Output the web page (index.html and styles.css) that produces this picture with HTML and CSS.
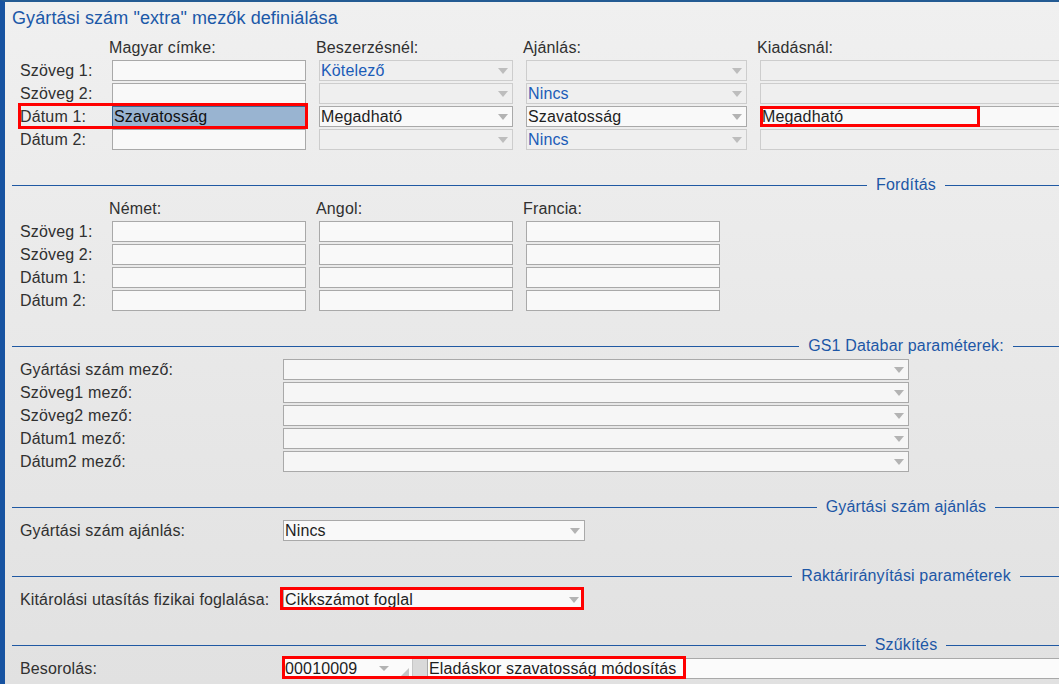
FILE: index.html
```html
<!DOCTYPE html>
<html lang="hu">
<head>
<meta charset="utf-8">
<title>Gyártási szám extra mezők definiálása</title>
<link rel="stylesheet" href="styles.css">
</head>
<body>
<div class="frame">
  <div class="form">
    <h1 class="title">Gyártási szám "extra" mezők definiálása</h1>

    <div class="grid g-def">
      <div></div>
      <div class="hdr">Magyar címke:</div>
      <div class="hdr">Beszerzésnél:</div>
      <div class="hdr">Ajánlás:</div>
      <div class="hdr">Kiadásnál:</div>

      <div class="lbl">Szöveg 1:</div>
      <div class="fld w194"></div>
      <div class="fld dis w194"><span class="val blue">Kötelező</span><i class="arr"></i></div>
      <div class="fld dis w221"><span class="val"></span><i class="arr"></i></div>
      <div class="fld dis wk"></div>

      <div class="lbl">Szöveg 2:</div>
      <div class="fld w194"></div>
      <div class="fld dis w194"><span class="val"></span><i class="arr"></i></div>
      <div class="fld dis w221"><span class="val blue">Nincs</span><i class="arr"></i></div>
      <div class="fld dis wk"></div>

      <div class="lbl host">Dátum 1:<span class="mark mark-d1"></span></div>
      <div class="fld hl w194"><span class="val">Szavatosság</span></div>
      <div class="fld w194"><span class="val">Megadható</span><i class="arr"></i></div>
      <div class="fld w221"><span class="val">Szavatosság</span><i class="arr"></i></div>
      <div class="fld wk host"><span class="val">Megadható</span><span class="mark mark-k"></span></div>

      <div class="lbl">Dátum 2:</div>
      <div class="fld w194"></div>
      <div class="fld dis w194"><span class="val"></span><i class="arr"></i></div>
      <div class="fld dis w221"><span class="val blue">Nincs</span><i class="arr"></i></div>
      <div class="fld dis wk"></div>
    </div>

    <div class="sep"><span class="ln"></span><span class="st">Fordítás</span><span class="ln"></span></div>

    <div class="grid g-tr">
      <div></div>
      <div class="hdr">Német:</div>
      <div class="hdr">Angol:</div>
      <div class="hdr">Francia:</div>

      <div class="lbl">Szöveg 1:</div>
      <div class="fld w194"></div>
      <div class="fld w194"></div>
      <div class="fld w194"></div>

      <div class="lbl">Szöveg 2:</div>
      <div class="fld w194"></div>
      <div class="fld w194"></div>
      <div class="fld w194"></div>

      <div class="lbl">Dátum 1:</div>
      <div class="fld w194"></div>
      <div class="fld w194"></div>
      <div class="fld w194"></div>

      <div class="lbl">Dátum 2:</div>
      <div class="fld w194"></div>
      <div class="fld w194"></div>
      <div class="fld w194"></div>
    </div>

    <div class="sep"><span class="ln"></span><span class="st">GS1 Databar paraméterek:</span><span class="ln"></span></div>

    <div class="grid g-wide">
      <div class="lbl">Gyártási szám mező:</div>
      <div class="fld gs w626"><span class="val"></span><i class="arr"></i></div>
      <div class="lbl">Szöveg1 mező:</div>
      <div class="fld gs w626"><span class="val"></span><i class="arr"></i></div>
      <div class="lbl">Szöveg2 mező:</div>
      <div class="fld gs w626"><span class="val"></span><i class="arr"></i></div>
      <div class="lbl">Dátum1 mező:</div>
      <div class="fld gs w626"><span class="val"></span><i class="arr"></i></div>
      <div class="lbl">Dátum2 mező:</div>
      <div class="fld gs w626"><span class="val"></span><i class="arr"></i></div>
    </div>

    <div class="sep"><span class="ln"></span><span class="st">Gyártási szám ajánlás</span><span class="ln"></span></div>

    <div class="grid g-wide">
      <div class="lbl">Gyártási szám ajánlás:</div>
      <div class="fld w302"><span class="val">Nincs</span><i class="arr"></i></div>
    </div>

    <div class="sep"><span class="ln"></span><span class="st">Raktárirányítási paraméterek</span><span class="ln"></span></div>

    <div class="grid g-wide">
      <div class="lbl">Kitárolási utasítás fizikai foglalása:</div>
      <div class="fld w301 host"><span class="val">Cikkszámot foglal</span><i class="arr"></i><span class="mark mark-kit"></span></div>
    </div>

    <div class="sep"><span class="ln"></span><span class="st">Szűkítés</span><span class="ln"></span></div>

    <div class="grid g-wide">
      <div class="lbl">Besorolás:</div>
      <div class="combo host">
        <div class="fld code"><span class="val">00010009</span><i class="arr arr-s"></i><i class="grip"></i></div>
        <div class="gbox"></div>
        <div class="fld desc"><span class="val">Eladáskor szavatosság módosítás</span></div>
        <span class="mark mark-bes"></span>
      </div>
    </div>
  </div>
</div>
</body>
</html>
```

FILE: styles.css
```css
html, body {
  margin: 0;
  padding: 0;
}

body {
  width: 1059px;
  height: 684px;
  overflow: hidden;
  background: linear-gradient(#f0f0f0, #e1e1e1);
  font-family: "Liberation Sans", Arial, sans-serif;
  font-size: 16px;
  letter-spacing: 0.15px;
  color: #303030;
}

.frame {
  box-sizing: border-box;
  width: 1059px;
  height: 684px;
  overflow: hidden;
  border-left: 5px solid #1753a1;
  border-top: 2px solid #245b93;
  padding: 5px 0 0 7px;
}

.form {
  width: 1788px;
}

.title {
  margin: 0;
  font-size: 18px;
  line-height: 22px;
  font-weight: normal;
  letter-spacing: 0.1px;
  color: #1b58a8;
}

.grid {
  display: grid;
  padding-left: 8px;
  row-gap: 2px;
  grid-auto-rows: 21px;
}

.g-def {
  margin-top: 8px;
  grid-template-columns: 92px 207px 207px 234px 400px;
}

.g-tr {
  margin-top: 3px;
  grid-template-columns: 92px 207px 207px 207px;
}

.g-wide {
  margin-top: 3px;
  grid-template-columns: 263px 1600px;
}

.hdr {
  line-height: 21px;
  margin-left: -3px;
  white-space: nowrap;
}

.lbl {
  line-height: 21px;
  white-space: nowrap;
}

.host {
  position: relative;
}

.fld {
  box-sizing: border-box;
  flex-shrink: 0;
  height: 21px;
  border: 1px solid #a9a9a9;
  background: #f9f9f9;
  display: flex;
  align-items: center;
  padding-left: 1px;
  line-height: 19px;
  color: #1e1e1e;
  white-space: nowrap;
}

.fld.dis {
  background: #efefef;
  border-color: #cdcdcd;
}

.fld.gs {
  background: #f6f6f6;
}

.fld.hl {
  background: #99b4d1;
  border-color: #3a6591;
  color: #111;
}

.val.blue {
  color: #1b5cb8;
}

.w194 { width: 194px; }
.w221 { width: 221px; }
.w301 { width: 301px; }
.w302 { width: 302px; }
.w626 { width: 626px; }
.wk { width: 400px; }

.arr {
  flex-shrink: 0;
  margin-left: auto;
  margin-right: 4px;
  width: 0;
  height: 0;
  border-left: 5px solid transparent;
  border-right: 5px solid transparent;
  border-top: 6px solid #b3b3b3;
}

.dis .arr {
  border-top-color: #bdbdbd;
}

.sep {
  display: flex;
  height: 20px;
  margin-top: 25px;
}

.sep .ln {
  flex: 1;
  height: 1px;
  margin-top: 10px;
  background: #2059a3;
}

.sep .st {
  padding: 0 9px;
  line-height: 20px;
  color: #1d57a6;
  white-space: nowrap;
}

.combo {
  display: flex;
}

.fld.code {
  width: 129px;
  background: #fbfbfb;
  border-right: none;
}

.arr-s {
  margin-right: 0;
  border-top-width: 5px;
}

.grip {
  flex-shrink: 0;
  align-self: flex-end;
  margin: 0 3px 2px 12px;
  width: 0;
  height: 0;
  border-left: 8px solid transparent;
  border-bottom: 8px solid #c4c4c4;
}

.gbox {
  box-sizing: border-box;
  flex-shrink: 0;
  width: 15px;
  height: 21px;
  background: #d9d9d9;
  border-left: 1px solid #c6c6c6;
  border-top: 1px solid #a9a9a9;
  border-bottom: 1px solid #a9a9a9;
}

.fld.desc {
  width: 1400px;
  background: #fbfbfb;
  padding-left: 1px;
}

.mark {
  position: absolute;
  box-sizing: border-box;
  border: 3px solid #ff0000;
  z-index: 2;
}

.mark-d1 {
  left: -2px;
  top: -3px;
  width: 290px;
  height: 26px;
}

.mark-k {
  left: -1px;
  top: -1px;
  width: 220px;
  height: 21px;
}

.mark-kit {
  left: -4px;
  top: -3px;
  width: 304px;
  height: 23px;
}

.mark-bes {
  left: -1px;
  top: -2px;
  width: 404px;
  height: 23px;
}
```
